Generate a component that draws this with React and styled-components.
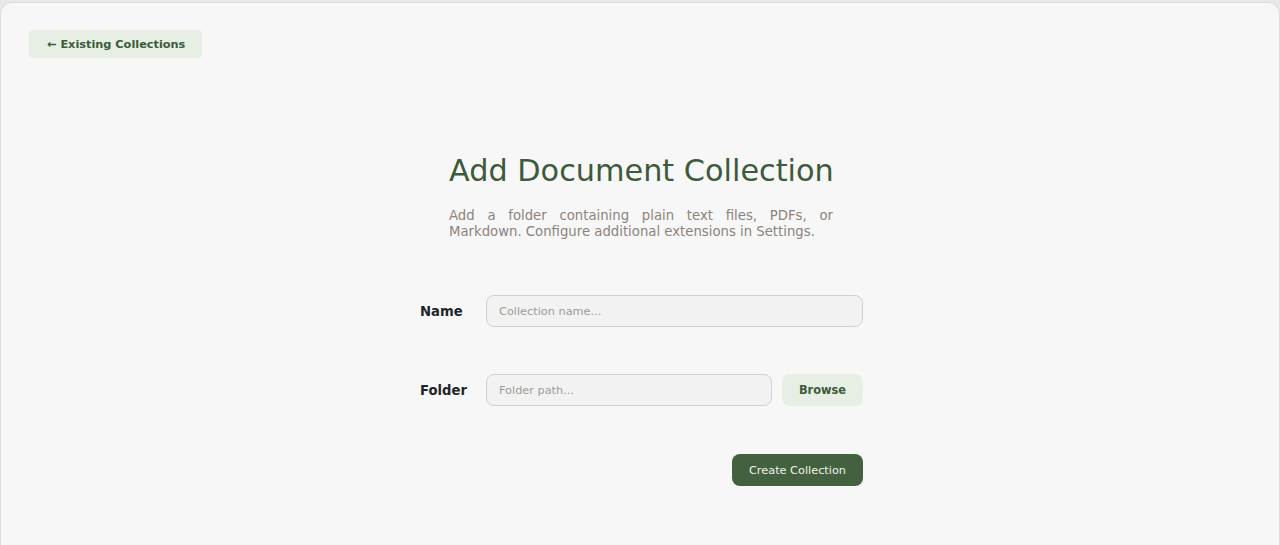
import React, { useState } from "react";
import styled, { createGlobalStyle } from "styled-components";

const GlobalStyle = createGlobalStyle`
  html, body {
    margin: 0;
    padding: 0;
    background: #e9e7e7;
    font-family: "DejaVu Sans", "Liberation Sans", sans-serif;
  }
  * {
    box-sizing: border-box;
  }
`;

const Page = styled.div`
  min-height: 100vh;
  padding-top: 2px;
`;

const Panel = styled.div`
  min-height: calc(100vh + 20px);
  background: #f7f7f7;
  border: 1px solid #dedcdc;
  border-bottom: none;
  border-radius: 12px 12px 0 0;
  padding: 27px 28px;
`;

const BackButton = styled.button`
  display: inline-flex;
  align-items: center;
  height: 28px;
  padding: 0 17px 0 18px;
  border: none;
  border-radius: 4px;
  background: #e7efe4;
  color: #3c5a3a;
  font-family: inherit;
  font-size: 11.3px;
  font-weight: bold;
  cursor: pointer;
`;

const Main = styled.div`
  width: 443px;
  margin: 95px 0 0 calc(50% - 220px);
`;

const Header = styled.div`
  width: 384px;
  margin: 0 0 0 29px;
`;

const Title = styled.h1`
  margin: 0;
  font-size: 30.3px;
  font-weight: normal;
  line-height: 35px;
  white-space: nowrap;
  color: #3d5a3a;
`;

const Description = styled.p`
  margin: 20px 0 0;
  font-size: 13.25px;
  line-height: 16px;
  text-align: justify;
  color: #8c837b;
`;

const Form = styled.form`
  margin-top: 55px;
  display: flex;
  flex-direction: column;
  gap: 47px;
`;

const Row = styled.div`
  display: flex;
  align-items: center;
  gap: 10px;
`;

const Label = styled.label`
  width: 56px;
  flex: none;
  font-size: 13.2px;
  font-weight: bold;
  color: #1f2528;
`;

const Input = styled.input`
  flex: 1;
  min-width: 0;
  height: 32px;
  padding: 0 12px;
  border: 1px solid #d2d0d0;
  border-radius: 8px;
  background: #f2f2f2;
  font-family: inherit;
  font-size: 11.3px;
  color: #333;
  outline: none;
  &::placeholder {
    color: #a09a96;
  }
`;

const SecondaryButton = styled.button`
  flex: none;
  width: 81px;
  height: 32px;
  border: none;
  border-radius: 8px;
  background: #e7efe4;
  color: #3c5a3a;
  font-family: inherit;
  font-size: 11.4px;
  font-weight: bold;
  cursor: pointer;
`;

const Actions = styled.div`
  display: flex;
  justify-content: flex-end;
  margin-top: 1px;
`;

const PrimaryButton = styled.button`
  height: 32px;
  padding: 0 17px;
  border: none;
  border-radius: 8px;
  background: #44613f;
  color: #eef3ea;
  font-family: inherit;
  font-size: 11.3px;
  cursor: pointer;
`;

export default function App() {
  const [name, setName] = useState("");
  const [folder, setFolder] = useState("");

  return (
    <>
      <GlobalStyle />
      <Page>
        <Panel>
          <BackButton type="button">← Existing Collections</BackButton>
          <Main>
            <Header>
              <Title>Add Document Collection</Title>
              <Description>
                Add a folder containing plain text files, PDFs, or Markdown.
                Configure additional extensions in Settings.
              </Description>
            </Header>
            <Form onSubmit={(e) => e.preventDefault()}>
              <Row>
                <Label htmlFor="name">Name</Label>
                <Input
                  id="name"
                  autoFocus
                  placeholder="Collection name..."
                  value={name}
                  onChange={(e) => setName(e.target.value)}
                />
              </Row>
              <Row>
                <Label htmlFor="folder">Folder</Label>
                <Input
                  id="folder"
                  placeholder="Folder path..."
                  value={folder}
                  onChange={(e) => setFolder(e.target.value)}
                />
                <SecondaryButton type="button">Browse</SecondaryButton>
              </Row>
              <Actions>
                <PrimaryButton type="submit">Create Collection</PrimaryButton>
              </Actions>
            </Form>
          </Main>
        </Panel>
      </Page>
    </>
  );
}
